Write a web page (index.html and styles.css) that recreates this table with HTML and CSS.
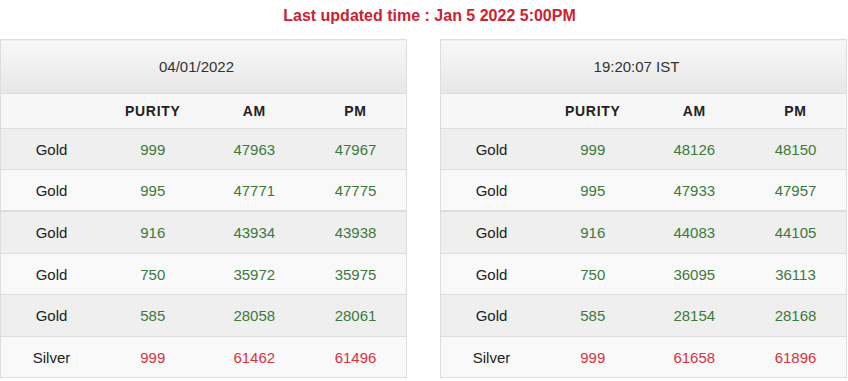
FILE: index.html
```html
<!DOCTYPE html>
<html lang="en">
<head>
    <meta charset="UTF-8">
    <meta name="viewport" content="width=device-width, initial-scale=1.0">
    <title>Gold Rates</title>
    <link rel="stylesheet" href="styles.css">
</head>
<body>

    <p class="updated">Last updated time : Jan 5 2022 5:00PM</p>

    <div class="rates">
        <table class="rate-table">
            <thead>
                <tr class="title-row"><th colspan="4">04/01/2022</th></tr>
                <tr class="col-row"><th></th><th>PURITY</th><th>AM</th><th>PM</th></tr>
            </thead>
            <tbody>
                <tr><td>Gold</td><td class="up">999</td><td class="up">47963</td><td class="up">47967</td></tr>
                <tr><td>Gold</td><td class="up">995</td><td class="up">47771</td><td class="up">47775</td></tr>
            </tbody>
            <tbody class="more">
                <tr><td>Gold</td><td class="up">916</td><td class="up">43934</td><td class="up">43938</td></tr>
                <tr><td>Gold</td><td class="up">750</td><td class="up">35972</td><td class="up">35975</td></tr>
                <tr><td>Gold</td><td class="up">585</td><td class="up">28058</td><td class="up">28061</td></tr>
                <tr><td>Silver</td><td class="down">999</td><td class="down">61462</td><td class="down">61496</td></tr>
            </tbody>
        </table>

        <table class="rate-table">
            <thead>
                <tr class="title-row"><th colspan="4">19:20:07 IST</th></tr>
                <tr class="col-row"><th></th><th>PURITY</th><th>AM</th><th>PM</th></tr>
            </thead>
            <tbody>
                <tr><td>Gold</td><td class="up">999</td><td class="up">48126</td><td class="up">48150</td></tr>
                <tr><td>Gold</td><td class="up">995</td><td class="up">47933</td><td class="up">47957</td></tr>
            </tbody>
            <tbody class="more">
                <tr><td>Gold</td><td class="up">916</td><td class="up">44083</td><td class="up">44105</td></tr>
                <tr><td>Gold</td><td class="up">750</td><td class="up">36095</td><td class="up">36113</td></tr>
                <tr><td>Gold</td><td class="up">585</td><td class="up">28154</td><td class="up">28168</td></tr>
                <tr><td>Silver</td><td class="down">999</td><td class="down">61658</td><td class="down">61896</td></tr>
            </tbody>
        </table>
    </div>

</body>
</html>
```

FILE: styles.css
```css
body {
    font-family: "Liberation Sans", Arial, sans-serif;
    background-color: #fff;
    color: #222;
    margin: 0;
    padding: 0;
}
.updated {
    margin: 0;
    padding: 7px 0 0 11px;
    height: 32px;
    text-align: center;
    font-size: 16px;
    font-weight: bold;
    color: #cc2231;
}
.rates {
    display: flex;
    gap: 33px;
    width: 847px;
}
.rate-table {
    width: 407px;
    border-collapse: collapse;
    table-layout: fixed;
    border: 1px solid #ddd;
    font-size: 15px;
}
.rate-table th, .rate-table td {
    text-align: center;
    border-top: 1px solid #ddd;
    padding: 0;
}
.title-row th {
    height: 53px;
    font-weight: normal;
    color: #333;
    padding-right: 14px;
    background: linear-gradient(#f8f8f8, #e7e7e7);
}
.col-row th {
    height: 34px;
    font-size: 14px;
    letter-spacing: 0.7px;
    font-weight: bold;
    color: #222;
    background-color: #f7f7f7;
}
.rate-table td {
    height: 40px;
}
.rate-table tbody tr:nth-child(odd) td {
    background-color: #efefef;
}
.rate-table tbody tr:nth-child(even) td {
    background-color: #f9f9f9;
}
.more {
    border-top: 2px solid #ddd;
}
.more tr:first-child td {
    border-top: 2px solid #ddd;
}
.more tr:nth-child(odd) td {
    height: 41px;
}
.up {
    color: #3b7a3b;
}
.down {
    color: #d8323e;
}
```
